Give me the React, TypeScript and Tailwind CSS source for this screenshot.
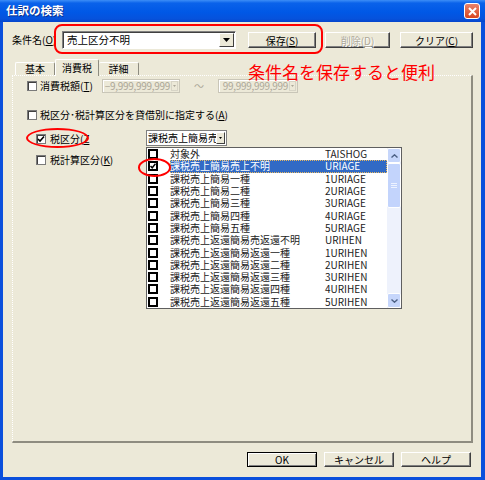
import React from "react";

const rows: [string, string][] = [
  ["対象外", "TAISHOG"],
  ["課税売上簡易売上不明", "URIAGE"],
  ["課税売上簡易一種", "1URIAGE"],
  ["課税売上簡易二種", "2URIAGE"],
  ["課税売上簡易三種", "3URIAGE"],
  ["課税売上簡易四種", "4URIAGE"],
  ["課税売上簡易五種", "5URIAGE"],
  ["課税売上返還簡易売返還不明", "URIHEN"],
  ["課税売上返還簡易返還一種", "1URIHEN"],
  ["課税売上返還簡易返還二種", "2URIHEN"],
  ["課税売上返還簡易返還三種", "3URIHEN"],
  ["課税売上返還簡易返還四種", "4URIHEN"],
  ["課税売上返還簡易返還五種", "5URIHEN"],
];

const Btn = ({ children, w, disabled, def }: { children: React.ReactNode; w: string; disabled?: boolean; def?: boolean }) => (
  <div
    className={`${w} h-full flex items-center justify-center bg-[#ece9d8] ${
      def
        ? "border border-black shadow-[inset_1px_1px_0_#fff,inset_-1px_-1px_0_#808080]"
        : "border border-t-white border-l-white border-r-[#404040] border-b-[#404040] shadow-[inset_-1px_-1px_0_#808080]"
    } ${disabled ? "text-[#aca899] [text-shadow:1px_1px_0_#fff]" : "text-black"}`}
  >
    {children}
  </div>
);

const Check = ({ checked }: { checked?: boolean }) => (
  <div className="w-[10px] h-[10px] shrink-0 bg-white border border-[#7a7a7a] shadow-[inset_1px_1px_0_#404040] flex items-center justify-center">
    {checked && (
      <svg width="8" height="8" viewBox="0 0 8 8">
        <path d="M1 4 L3 6 L7 1.5" stroke="#000" strokeWidth="1.6" fill="none" />
      </svg>
    )}
  </div>
);

const ListCheck = ({ checked }: { checked?: boolean }) => (
  <div className="w-[10px] h-[10px] border-2 border-black bg-white flex items-center justify-center">
    {checked && (
      <svg width="6" height="6" viewBox="0 0 6 6">
        <path d="M0.5 3 L2.2 4.8 L5.5 0.8" stroke="#000" strokeWidth="1.5" fill="none" />
      </svg>
    )}
  </div>
);

const Arrow = ({ color = "#000" }: { color?: string }) => (
  <svg width="7" height="4" viewBox="0 0 7 4">
    <path d="M0 0 H7 L3.5 4 Z" fill={color} />
  </svg>
);

const SpinBox = ({ w, value }: { w: string; value: string }) => (
  <div className={`${w} h-[14px] flex items-center border border-[#c9c6b8] shadow-[inset_1px_1px_0_#fff] bg-[#ece9d8] text-[#aca899]`}>
    <span className="flex-1 text-right pr-[1px] leading-none tracking-[-0.3px]">{value}</span>
    <div className="w-[7px] h-[10px] mr-[1px] border border-[#d7d4c6] flex items-center justify-center">
      <svg width="3" height="2" viewBox="0 0 3 2">
        <path d="M0 0 H3 L1.5 2 Z" fill="#aca899" />
      </svg>
    </div>
  </div>
);

export default function App() {
  return (
    <div className="relative w-[485px] h-[480px] bg-[#0a4fdc] font-['Noto_Sans_CJK_JP','Noto_Sans',sans-serif] text-[10px] text-black overflow-hidden">
      <div className="h-[22px] flex items-center justify-between pl-[6px] pr-[5px] bg-[linear-gradient(to_bottom,#3d8ef7_0%,#0a62ea_14%,#0058e6_55%,#0652dc_85%,#0545cc_100%)]">
        <span className="text-white font-bold text-[11.5px] leading-none [text-shadow:1px_1px_0_#0a2e8a]">仕訳の検索</span>
        <div className="w-[16px] h-[16px] rounded-[3px] border border-white bg-[linear-gradient(to_bottom,#e8826a,#d9461f)] flex items-center justify-center">
          <svg width="9" height="9" viewBox="0 0 9 9">
            <path d="M1 1 L8 8 M8 1 L1 8" stroke="#fff" strokeWidth="2" />
          </svg>
        </div>
      </div>

      <div className="ml-[3px] mr-[4px] h-[455px] bg-[#ece9d8] flex flex-col">
        <div className="mt-[9px] ml-[9px] h-[18px] flex items-center">
          <span className="w-[50px] leading-none">
            条件名(<u>O</u>)
          </span>
          <div className="w-[174px] h-[18px] bg-white border border-t-[#808080] border-l-[#808080] border-r-white border-b-white shadow-[inset_1px_1px_0_#404040] flex items-center">
            <span className="flex-1 pl-[4px] text-[10.5px] leading-none">売上区分不明</span>
            <div className="w-[15px] h-[14px] mr-[1px] border border-t-white border-l-white border-r-[#404040] border-b-[#404040] bg-[#ece9d8] flex items-center justify-center">
              <Arrow />
            </div>
          </div>
          <div className="ml-[12px] h-[16px] flex">
            <Btn w="w-[68px]">
              保存(<u>S</u>)
            </Btn>
          </div>
          <div className="ml-[9px] h-[16px] flex">
            <Btn w="w-[65px]" disabled>
              削除(<u>D</u>)
            </Btn>
          </div>
          <div className="ml-[10px] h-[16px] flex">
            <Btn w="w-[73px]">
              クリア(<u>C</u>)
            </Btn>
          </div>
        </div>

        <div className="mt-[10px] ml-[12px] h-[16px] flex items-end">
          <div className="w-[40px] h-[13px] border-t border-l border-white border-r border-r-[#8e8c80] rounded-t-[2px] flex items-center justify-center leading-none">
            基本
          </div>
          <div className="relative z-10 -mb-px w-[44px] h-[17px] bg-[#ece9d8] border-t border-l border-white border-r border-r-[#8e8c80] rounded-t-[2px] flex items-center justify-center leading-none pb-[1px]">
            消費税
          </div>
          <div className="w-[40px] h-[13px] border-t border-white border-r border-r-[#8e8c80] rounded-t-[2px] flex items-center justify-center leading-none">
            詳細
          </div>
        </div>

        <div className="ml-[9px] w-[461px] h-[368px] border-l border-t border-white border-dotted border-r-2 border-b-2 border-r-[#8e8c80] border-b-[#8e8c80] [border-right-style:solid] [border-bottom-style:solid] pl-[14px]">
          <div className="mt-[3px] h-[14px] flex items-center">
            <Check />
            <span className="ml-[3px] w-[62px] leading-none">
              消費税額(<u>T</u>)
            </span>
            <SpinBox w="w-[78px]" value="−9,999,999,999" />
            <span className="w-[38px] text-center text-[#aca899] leading-none">〜</span>
            <SpinBox w="w-[80px]" value="99,999,999,999" />
          </div>

          <div className="mt-[15px] h-[14px] flex items-center">
            <Check />
            <span className="ml-[3px] leading-none">
              税区分･税計算区分を貸借別に指定する(<u>A</u>)
            </span>
          </div>

          <div className="mt-[8px] flex">
            <div className="ml-[9px] w-[110px] flex flex-col">
              <div className="mt-[2px] h-[14px] flex items-center">
                <Check checked />
                <span className="ml-[4px] leading-none">
                  税区分(<u>Z</u>
                </span>
              </div>
              <div className="mt-[7px] h-[14px] flex items-center">
                <Check />
                <span className="ml-[4px] leading-none">
                  税計算区分(<u>K</u>)
                </span>
              </div>
            </div>

            <div className="flex flex-col">
              <div className="w-[81px] h-[16px] bg-white border border-[#7f7f7f] flex items-center overflow-hidden">
                <span className="flex-1 pl-[1px] whitespace-nowrap overflow-hidden leading-none">課税売上簡易売上不明</span>
                <div className="w-[9px] h-[12px] mr-[1px] shrink-0 border border-t-white border-l-white border-r-[#404040] border-b-[#404040] bg-[#ece9d8] flex items-center justify-center">
                  <svg width="3" height="2" viewBox="0 0 3 2">
                    <path d="M0 0 H3 L1.5 2 Z" fill="#000" />
                  </svg>
                </div>
              </div>
              <div className="mt-[1px] w-[256px] h-[162px] bg-white border border-[#5f5f5f] flex">
                <div className="flex-1 flex flex-col">
                  {rows.map(([name, code], i) => (
                    <div key={code} className="h-[12.3px] flex items-center">
                      <div className="w-[23px] pl-[1px] shrink-0">
                        <ListCheck checked={i === 1} />
                      </div>
                      <div
                        className={`flex-1 h-full flex items-center leading-none ${
                          i === 1 ? "bg-[#316ac5] text-white outline-1 outline-dotted outline-[#e8b860] -outline-offset-1" : "text-[#222]"
                        }`}
                      >
                        <span className="w-[155px] whitespace-nowrap">{name}</span>
                        <span>{code}</span>
                      </div>
                    </div>
                  ))}
                </div>
                <div className="w-[14px] flex flex-col bg-[#eef2fc]">
                  <div className="h-[15px] rounded-[2px] border border-white bg-[#c6d6fb] flex items-center justify-center">
                    <svg width="7" height="4" viewBox="0 0 7 4">
                      <path d="M0.5 3.5 L3.5 0.8 L6.5 3.5" stroke="#4d6185" strokeWidth="1.4" fill="none" />
                    </svg>
                  </div>
                  <div className="h-[45px] rounded-[2px] border border-white bg-[#c3d4fc] flex flex-col items-center justify-center gap-[1px]">
                    <div className="w-[6px] h-px bg-[#eef3ff]" />
                    <div className="w-[6px] h-px bg-[#eef3ff]" />
                    <div className="w-[6px] h-px bg-[#eef3ff]" />
                  </div>
                  <div className="flex-1" />
                  <div className="h-[15px] rounded-[2px] border border-white bg-[#c6d6fb] flex items-center justify-center">
                    <svg width="7" height="4" viewBox="0 0 7 4">
                      <path d="M0.5 0.5 L3.5 3.2 L6.5 0.5" stroke="#4d6185" strokeWidth="1.4" fill="none" />
                    </svg>
                  </div>
                </div>
              </div>
            </div>
          </div>
        </div>

        <div className="mt-[9px] h-[15px] flex justify-end gap-[7px] pr-[10px]">
          <Btn w="w-[70px]" def>
            OK
          </Btn>
          <Btn w="w-[70px]">キャンセル</Btn>
          <Btn w="w-[70px]">ヘルプ</Btn>
        </div>
      </div>

      <div className="absolute left-[54px] top-[24px] w-[269px] h-[30px] border-2 border-[#ff0000] rounded-[8px]" />
      <div className="absolute left-[248px] top-[63px] text-[17px] leading-none text-[#ff0000]">条件名を保存すると便利</div>
      <div className="absolute left-[26px] top-[128px] w-[63px] h-[20px] border-2 border-[#ff0000] rounded-[50%]" />
      <div className="absolute left-[138px] top-[158px] w-[33px] h-[19px] border-2 border-[#ff0000] rounded-[50%]" />
    </div>
  );
}
